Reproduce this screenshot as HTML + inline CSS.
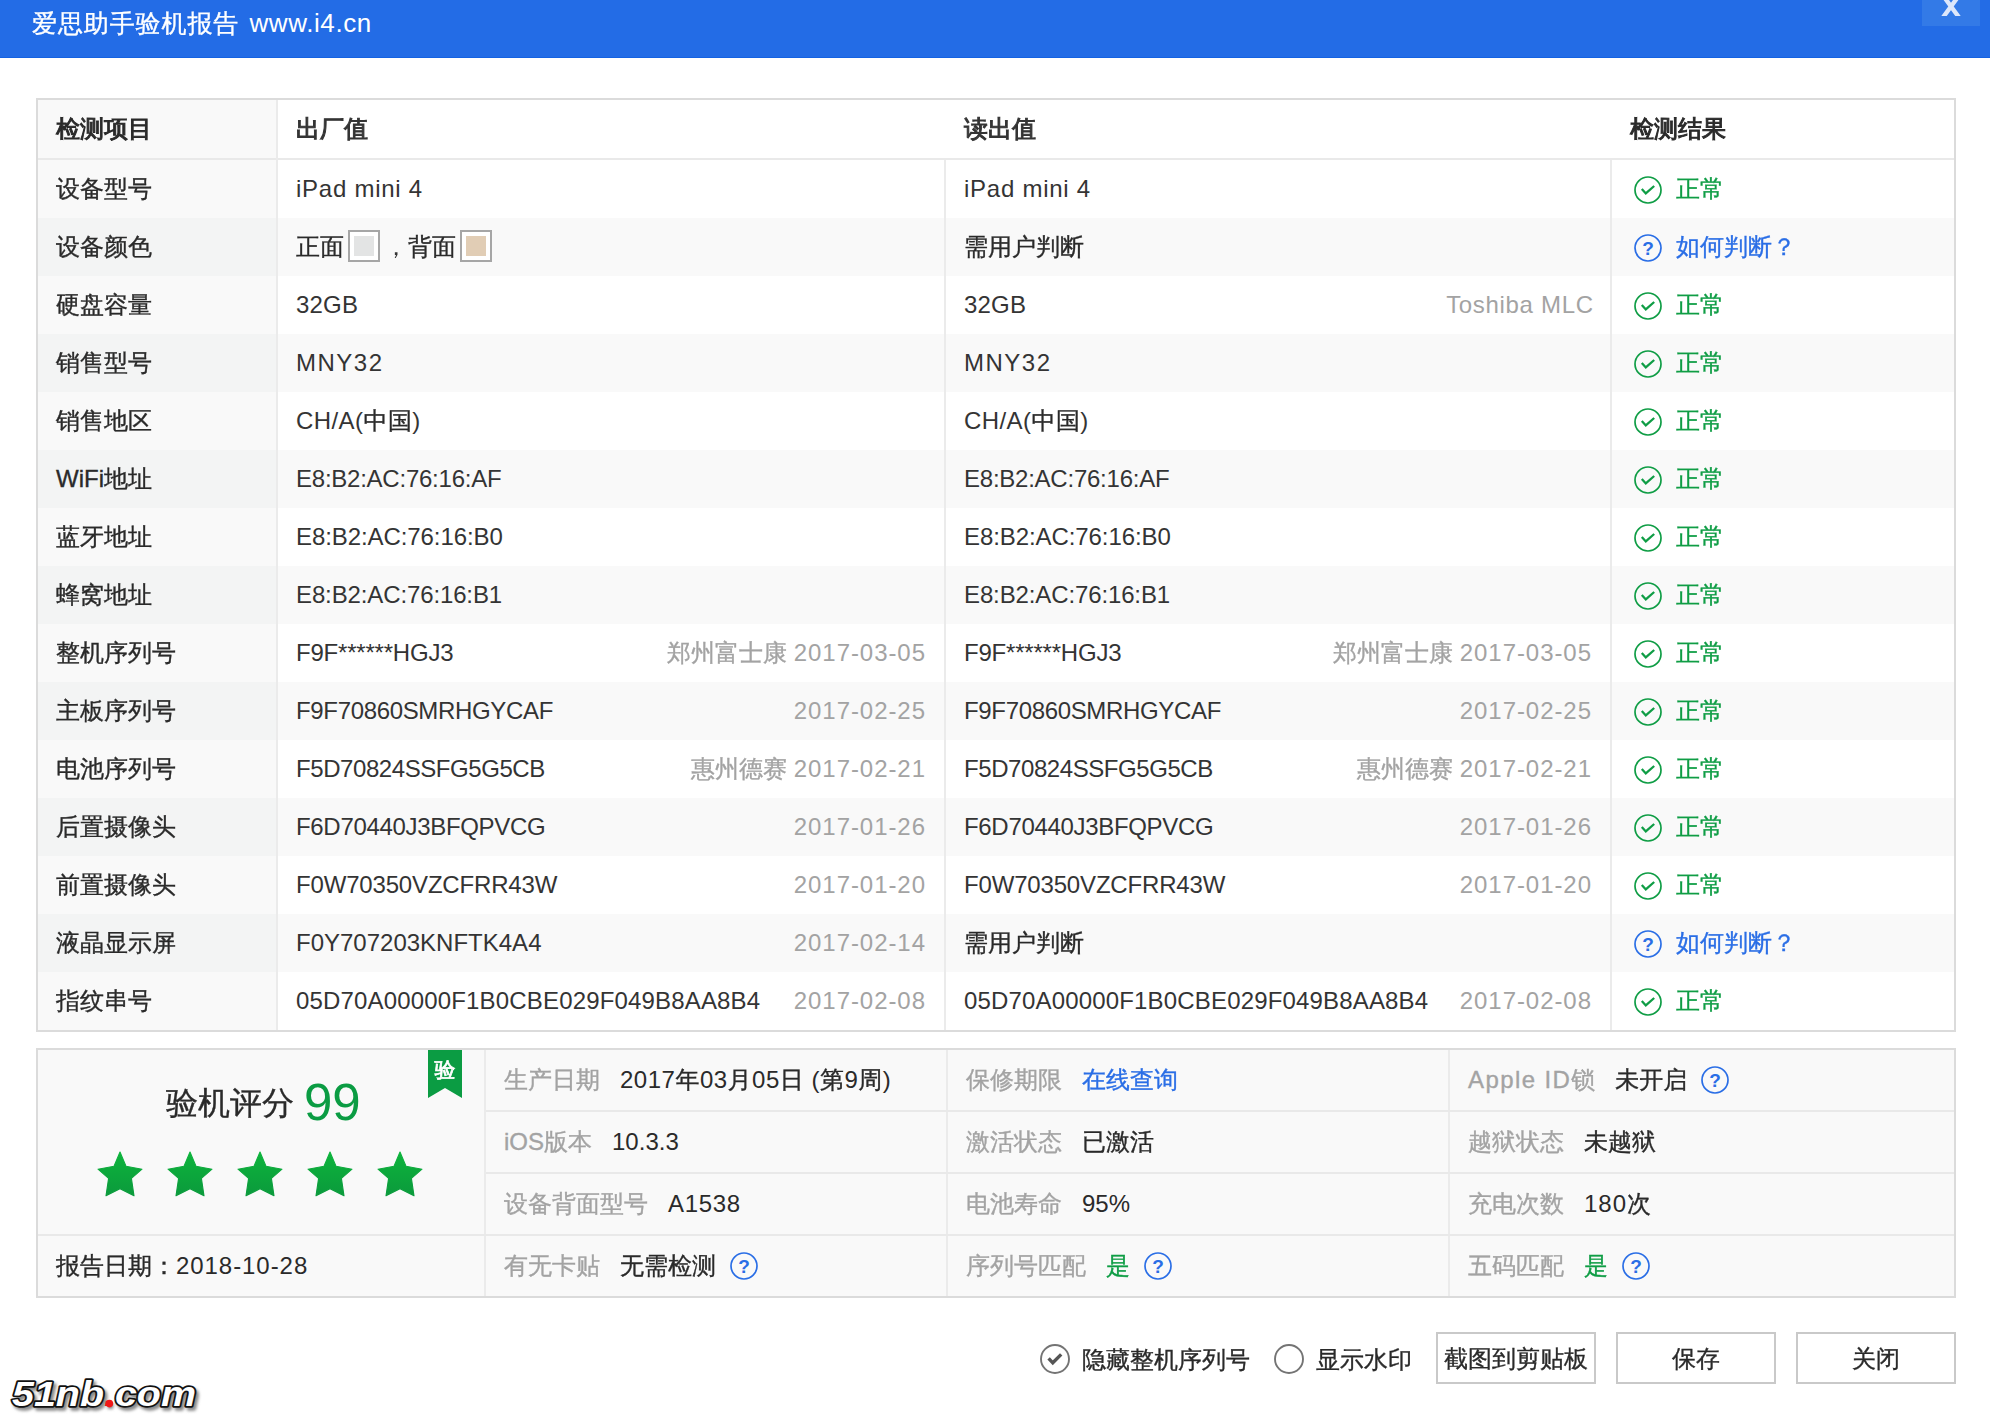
<!DOCTYPE html>
<html lang="zh-CN">
<head>
<meta charset="utf-8">
<title>爱思助手验机报告</title>
<style>
html,body{margin:0;padding:0;}
body{width:1990px;height:1418px;overflow:hidden;background:#fff;position:relative;
 font-family:"Liberation Sans","WenQuanYi Zen Hei","Noto Sans CJK SC",sans-serif;font-size:24px;color:#2a2a2a;}
*{box-sizing:border-box;}
.abs{position:absolute;}
.k,.c1,.lab,.btn,.g,.b{-webkit-text-stroke:.35px;}
.c2 .k,.c3 .k{color:#2a2a2a;}
#bar{position:absolute;left:0;top:0;width:1990px;height:58px;background:#236ce6;border-bottom:1px solid #1462e2;}
#title{position:absolute;left:32px;top:0;height:46px;line-height:46px;color:#fff;font-size:26px;white-space:nowrap;}
#title span{letter-spacing:.6px;margin-left:3px;}
#title b{font-weight:normal;font-size:25px;letter-spacing:.9px;}
#close{position:absolute;left:1922px;top:0;width:58px;height:26px;background:#337ae7;overflow:hidden;}
#tbl{position:absolute;left:36px;top:98px;width:1920px;height:934px;border:2px solid #dbdbdb;background:#fff;}
.r{position:absolute;left:0;width:1916px;height:58px;line-height:58px;white-space:nowrap;}
.r.alt{background:#f9f9f9;}
.c1{position:absolute;left:0;top:0;width:238px;height:58px;background:#f9f9f9;padding-left:18px;}
.alt .c1{background:#f3f4f4;}
.c2{position:absolute;left:258px;top:0;color:#343434;}
.c2r{position:absolute;right:1029px;top:0;color:#a3a3a3;}
.c3{position:absolute;left:926px;top:0;color:#343434;}
.c3r{position:absolute;right:363px;top:0;color:#a3a3a3;}
.c4{position:absolute;left:1594px;top:0;}
.ic{position:absolute;left:2px;top:16px;width:28px;height:28px;}
.c4>span{position:absolute;left:44px;top:0;}
.dt{letter-spacing:.94px;margin-right:-.94px;}
.g{color:#0f9d45;}
.b{color:#2a6ee6;}
.vl{position:absolute;width:2px;background:#ebebeb;}
.hl{position:absolute;height:2px;background:#e9e9e9;}
.hd,.hd .c1{-webkit-text-stroke:1px;}
.sw{display:inline-block;width:32px;height:32px;border:2px solid #a6a6a6;background:#fff;vertical-align:middle;margin:-6px 0 0 4px;position:relative;}
.sw i{position:absolute;left:4px;top:4px;width:20px;height:20px;}
.cm{display:inline-block;width:28px;text-indent:4px;}
#info{position:absolute;left:36px;top:1048px;width:1920px;height:250px;border:2px solid #dbdbdb;background:#f9f9f9;}
.lab{color:#a3a3a3;}
.it{position:absolute;height:60px;line-height:60px;white-space:nowrap;}
.it .lab{margin-right:20px;}
.q{font-style:normal;display:inline-block;width:28px;height:28px;vertical-align:middle;margin:-4px 0 0 14px;position:relative;}
.q .ic{top:0;left:0;}
.btn{position:absolute;top:1332px;width:160px;height:52px;border:2px solid #c9c9c9;background:#fff;text-align:center;line-height:50px;white-space:nowrap;}
</style>
</head>
<body>
<div id="bar"><div id="title"><b class="k">爱思助手验机报告</b> <span>www.i4.cn</span></div>
<div id="close"><svg width="58" height="26" viewBox="0 0 58 26"><svg x="0" y="0" width="58" height="16" viewBox="0 0 58 16" overflow="hidden"><path d="M19.1 20 L37.5 -5.2 M38.9 20 L20.5 -5.2" stroke="#dce7fb" stroke-width="4.4" fill="none"/></svg></svg></div></div>
<div id="tbl">
<div class="r hd" style="top:0"><div class="c1">检测项目</div><div class="c2">出厂值</div><div class="c3">读出值</div><div class="c4" style="left:1592px">检测结果</div></div>
<div class="r" style="top:60px"><div class="c1">设备型号</div><div class="c2"><span style="letter-spacing:0.74px">iPad mini 4</span></div><div class="c3"><span style="letter-spacing:0.74px">iPad mini 4</span></div><div class="c4"><svg class="ic" viewBox="0 0 28 28"><circle cx="14" cy="14" r="13" fill="none" stroke="#0f9d45" stroke-width="1.7"/><path d="M7.8 13 L11.8 17.4 L20.2 10" fill="none" stroke="#0f9d45" stroke-width="2.3"/></svg><span class="g">正常</span></div></div>
<div class="r alt" style="top:118px"><div class="c1">设备颜色</div><div class="c2"><span class="k">正面</span><i class="sw"><i style="background:#e3e4e4"></i></i><span class="cm">，</span><span class="k">背面</span><i class="sw"><i style="background:#e1cdb5"></i></i></div><div class="c3"><span class="k">需用户判断</span></div><div class="c4"><svg class="ic" viewBox="0 0 28 28"><circle cx="14" cy="14" r="13" fill="none" stroke="#2a6ee6" stroke-width="1.7"/><text x="14" y="21" text-anchor="middle" font-size="19" font-weight="bold" fill="#2a6ee6" font-family="Liberation Sans, sans-serif">?</text></svg><span class="b">如何判断？</span></div></div>
<div class="r" style="top:176px"><div class="c1">硬盘容量</div><div class="c2"><span style="letter-spacing:0.2px">32GB</span></div><div class="c3"><span style="letter-spacing:0.2px">32GB</span></div><div class="c3r"><span style="letter-spacing:.68px;margin-right:-2.7px">Toshiba MLC</span></div><div class="c4"><svg class="ic" viewBox="0 0 28 28"><circle cx="14" cy="14" r="13" fill="none" stroke="#0f9d45" stroke-width="1.7"/><path d="M7.8 13 L11.8 17.4 L20.2 10" fill="none" stroke="#0f9d45" stroke-width="2.3"/></svg><span class="g">正常</span></div></div>
<div class="r alt" style="top:234px"><div class="c1">销售型号</div><div class="c2"><span style="letter-spacing:1.5px">MNY32</span></div><div class="c3"><span style="letter-spacing:1.5px">MNY32</span></div><div class="c4"><svg class="ic" viewBox="0 0 28 28"><circle cx="14" cy="14" r="13" fill="none" stroke="#0f9d45" stroke-width="1.7"/><path d="M7.8 13 L11.8 17.4 L20.2 10" fill="none" stroke="#0f9d45" stroke-width="2.3"/></svg><span class="g">正常</span></div></div>
<div class="r" style="top:292px"><div class="c1">销售地区</div><div class="c2"><span style="letter-spacing:.43px">CH/A(<span class="k">中国</span>)</span></div><div class="c3"><span style="letter-spacing:.43px">CH/A(<span class="k">中国</span>)</span></div><div class="c4"><svg class="ic" viewBox="0 0 28 28"><circle cx="14" cy="14" r="13" fill="none" stroke="#0f9d45" stroke-width="1.7"/><path d="M7.8 13 L11.8 17.4 L20.2 10" fill="none" stroke="#0f9d45" stroke-width="2.3"/></svg><span class="g">正常</span></div></div>
<div class="r alt" style="top:350px"><div class="c1">WiFi地址</div><div class="c2"><span style="letter-spacing:-0.24px">E8:B2:AC:76:16:AF</span></div><div class="c3"><span style="letter-spacing:-0.24px">E8:B2:AC:76:16:AF</span></div><div class="c4"><svg class="ic" viewBox="0 0 28 28"><circle cx="14" cy="14" r="13" fill="none" stroke="#0f9d45" stroke-width="1.7"/><path d="M7.8 13 L11.8 17.4 L20.2 10" fill="none" stroke="#0f9d45" stroke-width="2.3"/></svg><span class="g">正常</span></div></div>
<div class="r" style="top:408px"><div class="c1">蓝牙地址</div><div class="c2"><span style="letter-spacing:-0.08px">E8:B2:AC:76:16:B0</span></div><div class="c3"><span style="letter-spacing:-0.08px">E8:B2:AC:76:16:B0</span></div><div class="c4"><svg class="ic" viewBox="0 0 28 28"><circle cx="14" cy="14" r="13" fill="none" stroke="#0f9d45" stroke-width="1.7"/><path d="M7.8 13 L11.8 17.4 L20.2 10" fill="none" stroke="#0f9d45" stroke-width="2.3"/></svg><span class="g">正常</span></div></div>
<div class="r alt" style="top:466px"><div class="c1">蜂窝地址</div><div class="c2"><span style="letter-spacing:-0.125px">E8:B2:AC:76:16:B1</span></div><div class="c3"><span style="letter-spacing:-0.125px">E8:B2:AC:76:16:B1</span></div><div class="c4"><svg class="ic" viewBox="0 0 28 28"><circle cx="14" cy="14" r="13" fill="none" stroke="#0f9d45" stroke-width="1.7"/><path d="M7.8 13 L11.8 17.4 L20.2 10" fill="none" stroke="#0f9d45" stroke-width="2.3"/></svg><span class="g">正常</span></div></div>
<div class="r" style="top:524px"><div class="c1">整机序列号</div><div class="c2"><span style="letter-spacing:-0.21px">F9F******HGJ3</span></div><div class="c2r"><span class="k">郑州富士康</span> <span class="dt">2017-03-05</span></div><div class="c3"><span style="letter-spacing:-0.21px">F9F******HGJ3</span></div><div class="c3r"><span class="k">郑州富士康</span> <span class="dt">2017-03-05</span></div><div class="c4"><svg class="ic" viewBox="0 0 28 28"><circle cx="14" cy="14" r="13" fill="none" stroke="#0f9d45" stroke-width="1.7"/><path d="M7.8 13 L11.8 17.4 L20.2 10" fill="none" stroke="#0f9d45" stroke-width="2.3"/></svg><span class="g">正常</span></div></div>
<div class="r alt" style="top:582px"><div class="c1">主板序列号</div><div class="c2"><span style="letter-spacing:-0.34px">F9F70860SMRHGYCAF</span></div><div class="c2r"><span class="dt">2017-02-25</span></div><div class="c3"><span style="letter-spacing:-0.34px">F9F70860SMRHGYCAF</span></div><div class="c3r"><span class="dt">2017-02-25</span></div><div class="c4"><svg class="ic" viewBox="0 0 28 28"><circle cx="14" cy="14" r="13" fill="none" stroke="#0f9d45" stroke-width="1.7"/><path d="M7.8 13 L11.8 17.4 L20.2 10" fill="none" stroke="#0f9d45" stroke-width="2.3"/></svg><span class="g">正常</span></div></div>
<div class="r" style="top:640px"><div class="c1">电池序列号</div><div class="c2"><span style="letter-spacing:-0.43px">F5D70824SSFG5G5CB</span></div><div class="c2r"><span class="k">惠州德赛</span> <span class="dt">2017-02-21</span></div><div class="c3"><span style="letter-spacing:-0.43px">F5D70824SSFG5G5CB</span></div><div class="c3r"><span class="k">惠州德赛</span> <span class="dt">2017-02-21</span></div><div class="c4"><svg class="ic" viewBox="0 0 28 28"><circle cx="14" cy="14" r="13" fill="none" stroke="#0f9d45" stroke-width="1.7"/><path d="M7.8 13 L11.8 17.4 L20.2 10" fill="none" stroke="#0f9d45" stroke-width="2.3"/></svg><span class="g">正常</span></div></div>
<div class="r alt" style="top:698px"><div class="c1">后置摄像头</div><div class="c2"><span style="letter-spacing:-0.32px">F6D70440J3BFQPVCG</span></div><div class="c2r"><span class="dt">2017-01-26</span></div><div class="c3"><span style="letter-spacing:-0.32px">F6D70440J3BFQPVCG</span></div><div class="c3r"><span class="dt">2017-01-26</span></div><div class="c4"><svg class="ic" viewBox="0 0 28 28"><circle cx="14" cy="14" r="13" fill="none" stroke="#0f9d45" stroke-width="1.7"/><path d="M7.8 13 L11.8 17.4 L20.2 10" fill="none" stroke="#0f9d45" stroke-width="2.3"/></svg><span class="g">正常</span></div></div>
<div class="r" style="top:756px"><div class="c1">前置摄像头</div><div class="c2"><span style="letter-spacing:-0.17px">F0W70350VZCFRR43W</span></div><div class="c2r"><span class="dt">2017-01-20</span></div><div class="c3"><span style="letter-spacing:-0.17px">F0W70350VZCFRR43W</span></div><div class="c3r"><span class="dt">2017-01-20</span></div><div class="c4"><svg class="ic" viewBox="0 0 28 28"><circle cx="14" cy="14" r="13" fill="none" stroke="#0f9d45" stroke-width="1.7"/><path d="M7.8 13 L11.8 17.4 L20.2 10" fill="none" stroke="#0f9d45" stroke-width="2.3"/></svg><span class="g">正常</span></div></div>
<div class="r alt" style="top:814px"><div class="c1">液晶显示屏</div><div class="c2">F0Y707203KNFTK4A4</div><div class="c2r"><span class="dt">2017-02-14</span></div><div class="c3"><span class="k">需用户判断</span></div><div class="c4"><svg class="ic" viewBox="0 0 28 28"><circle cx="14" cy="14" r="13" fill="none" stroke="#2a6ee6" stroke-width="1.7"/><text x="14" y="21" text-anchor="middle" font-size="19" font-weight="bold" fill="#2a6ee6" font-family="Liberation Sans, sans-serif">?</text></svg><span class="b">如何判断？</span></div></div>
<div class="r" style="top:872px"><div class="c1">指纹串号</div><div class="c2"><span style="letter-spacing:0.165px">05D70A00000F1B0CBE029F049B8AA8B4</span></div><div class="c2r"><span class="dt">2017-02-08</span></div><div class="c3"><span style="letter-spacing:0.165px">05D70A00000F1B0CBE029F049B8AA8B4</span></div><div class="c3r"><span class="dt">2017-02-08</span></div><div class="c4"><svg class="ic" viewBox="0 0 28 28"><circle cx="14" cy="14" r="13" fill="none" stroke="#0f9d45" stroke-width="1.7"/><path d="M7.8 13 L11.8 17.4 L20.2 10" fill="none" stroke="#0f9d45" stroke-width="2.3"/></svg><span class="g">正常</span></div></div>
<div class="hl" style="left:0;top:58px;width:1916px"></div>
<div class="vl" style="left:238px;top:0;height:930px"></div>
<div class="vl" style="left:906px;top:60px;height:870px"></div>
<div class="vl" style="left:1572px;top:60px;height:870px"></div>
</div>
<div id="info">
<div class="vl" style="left:446px;top:0;height:246px"></div>
<div class="vl" style="left:908px;top:0;height:246px"></div>
<div class="vl" style="left:1410px;top:0;height:246px"></div>
<div class="hl" style="left:448px;top:60px;width:1468px"></div>
<div class="hl" style="left:448px;top:122px;width:1468px"></div>
<div class="hl" style="left:0;top:184px;width:1916px"></div>
<svg class="abs" style="left:390px;top:0" width="36" height="50" viewBox="0 0 36 50"><path d="M0 0H34V48L17 38L0 48Z" fill="#0b9c43"/><text x="17" y="27" text-anchor="middle" font-size="21" fill="#fff" stroke="#fff" stroke-width=".7" font-family="Liberation Sans, WenQuanYi Zen Hei, Noto Sans CJK SC, sans-serif">验</text></svg>
<div class="abs" style="left:128px;top:25px;height:56px;line-height:56px;font-size:32px;white-space:nowrap"><span class="k">验机评分</span> <span style="font-size:51px;color:#0b9c43;vertical-align:-6px;margin-left:1px">99</span></div>
<svg class="abs" style="left:58px;top:100px" width="330" height="50" viewBox="-2 -2 330 50"><defs><linearGradient id="sg" x1="0" y1="0" x2="0" y2="1"><stop offset="0" stop-color="#0db43c"/><stop offset="1" stop-color="#0b9a3c"/></linearGradient></defs>
<g fill="url(#sg)" stroke="url(#sg)" stroke-width="1.1" stroke-linejoin="round">
<path d="M22 0 L28 14.2 L44 17.2 L33.4 26.3 L36 43.8 L22 36.8 L8 43.8 L10.6 26.3 L0 17.2 L16 14.2Z" transform="translate(0 0)"/>
<path d="M22 0 L28 14.2 L44 17.2 L33.4 26.3 L36 43.8 L22 36.8 L8 43.8 L10.6 26.3 L0 17.2 L16 14.2Z" transform="translate(70 0)"/>
<path d="M22 0 L28 14.2 L44 17.2 L33.4 26.3 L36 43.8 L22 36.8 L8 43.8 L10.6 26.3 L0 17.2 L16 14.2Z" transform="translate(140 0)"/>
<path d="M22 0 L28 14.2 L44 17.2 L33.4 26.3 L36 43.8 L22 36.8 L8 43.8 L10.6 26.3 L0 17.2 L16 14.2Z" transform="translate(210 0)"/>
<path d="M22 0 L28 14.2 L44 17.2 L33.4 26.3 L36 43.8 L22 36.8 L8 43.8 L10.6 26.3 L0 17.2 L16 14.2Z" transform="translate(280 0)"/>
</g></svg>
<div class="it" style="left:18px;top:186px"><span class="k">报告日期：</span><span class="dt">2018-10-28</span></div>
<div class="it" style="left:466px;top:0"><span class="lab">生产日期</span><span style="letter-spacing:.5px">2017<span class="k">年</span>03<span class="k">月</span>05<span class="k">日</span> (<span class="k">第</span>9<span class="k">周</span>)</span></div>
<div class="it" style="left:466px;top:62px"><span class="lab">iOS版本</span>10.3.3</div>
<div class="it" style="left:466px;top:124px"><span class="lab">设备背面型号</span><span style="letter-spacing:.7px">A1538</span></div>
<div class="it" style="left:466px;top:186px"><span class="lab">有无卡贴</span><span class="k">无需检测</span><i class="q"><svg class="ic" viewBox="0 0 28 28"><circle cx="14" cy="14" r="13" fill="none" stroke="#2a6ee6" stroke-width="1.7"/><text x="14" y="21" text-anchor="middle" font-size="19" font-weight="bold" fill="#2a6ee6" font-family="Liberation Sans, sans-serif">?</text></svg></i></div>
<div class="it" style="left:928px;top:0"><span class="lab">保修期限</span><span class="b">在线查询</span></div>
<div class="it" style="left:928px;top:62px"><span class="lab">激活状态</span><span class="k">已激活</span></div>
<div class="it" style="left:928px;top:124px"><span class="lab">电池寿命</span>95%</div>
<div class="it" style="left:928px;top:186px"><span class="lab">序列号匹配</span><span class="g">是</span><i class="q"><svg class="ic" viewBox="0 0 28 28"><circle cx="14" cy="14" r="13" fill="none" stroke="#2a6ee6" stroke-width="1.7"/><text x="14" y="21" text-anchor="middle" font-size="19" font-weight="bold" fill="#2a6ee6" font-family="Liberation Sans, sans-serif">?</text></svg></i></div>
<div class="it" style="left:1430px;top:0"><span class="lab"><span style="letter-spacing:1.4px">Apple ID</span>锁</span><span class="k">未开启</span><i class="q"><svg class="ic" viewBox="0 0 28 28"><circle cx="14" cy="14" r="13" fill="none" stroke="#2a6ee6" stroke-width="1.7"/><text x="14" y="21" text-anchor="middle" font-size="19" font-weight="bold" fill="#2a6ee6" font-family="Liberation Sans, sans-serif">?</text></svg></i></div>
<div class="it" style="left:1430px;top:62px"><span class="lab">越狱状态</span><span class="k">未越狱</span></div>
<div class="it" style="left:1430px;top:124px"><span class="lab">充电次数</span><span style="letter-spacing:1px">180</span><span class="k">次</span></div>
<div class="it" style="left:1430px;top:186px"><span class="lab">五码匹配</span><span class="g">是</span><i class="q"><svg class="ic" viewBox="0 0 28 28"><circle cx="14" cy="14" r="13" fill="none" stroke="#2a6ee6" stroke-width="1.7"/><text x="14" y="21" text-anchor="middle" font-size="19" font-weight="bold" fill="#2a6ee6" font-family="Liberation Sans, sans-serif">?</text></svg></i></div>
</div>
<svg class="abs" style="left:1039px;top:1343px" width="32" height="32" viewBox="0 0 32 32"><circle cx="16" cy="16" r="14" fill="#fff" stroke="#747474" stroke-width="1.9"/><path d="M9.6 15.4 L13.8 19.8 L22.2 11.4" fill="none" stroke="#555" stroke-width="3.4"/></svg>
<div class="abs" style="left:1082px;top:1335px;line-height:50px;white-space:nowrap" ><span class="k">隐藏整机序列号</span></div>
<svg class="abs" style="left:1273px;top:1343px" width="32" height="32" viewBox="0 0 32 32"><circle cx="16" cy="16" r="14" fill="#fff" stroke="#747474" stroke-width="1.9"/></svg>
<div class="abs" style="left:1316px;top:1335px;line-height:50px;white-space:nowrap" ><span class="k">显示水印</span></div>
<div class="btn" style="left:1436px">截图到剪贴板</div>
<div class="btn" style="left:1616px">保存</div>
<div class="btn" style="left:1796px">关闭</div>
<svg class="abs" style="left:0;top:1366px" width="230" height="52" viewBox="0 0 230 52">
<defs><filter id="ws" x="-10%" y="-20%" width="125%" height="150%"><feGaussianBlur stdDeviation="1.5"/></filter></defs>
<text x="14.5" y="43" font-family="Liberation Sans, sans-serif" font-weight="bold" font-style="italic" font-size="35" fill="#8a8a8a" stroke="#8a8a8a" stroke-width="3.6" stroke-linejoin="round" textLength="184" lengthAdjust="spacingAndGlyphs" filter="url(#ws)">51nb<tspan stroke="none">.</tspan>com</text>
<text x="12" y="40" font-family="Liberation Sans, sans-serif" font-weight="bold" font-style="italic" font-size="35" fill="#fff" stroke="#111" stroke-width="3.4" stroke-linejoin="round" paint-order="stroke" textLength="184" lengthAdjust="spacingAndGlyphs">51nb<tspan fill="#f01818" stroke="none">.</tspan>com</text>
<circle cx="109.4" cy="37.6" r="3.8" fill="#f01818"/>
</svg>
</body>
</html>
